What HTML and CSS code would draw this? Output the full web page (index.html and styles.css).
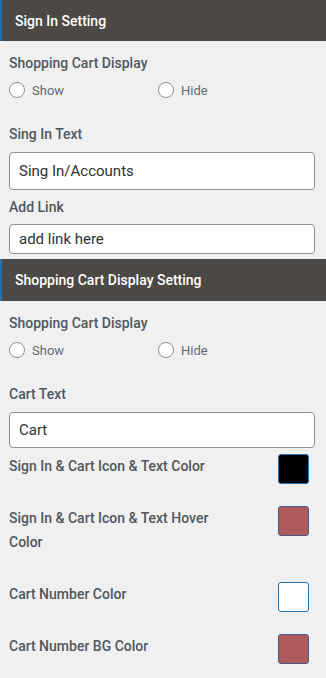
FILE: index.html
```
<!DOCTYPE html>
<html>
<head>
<meta charset="UTF-8">
<title>Header Settings</title>
<link rel="stylesheet" href="styles.css">
</head>
<body>

  <div class="head">Sign In Setting</div>
  <div class="sect">
    <div class="capt first">Shopping Cart Display</div>
    <div class="radios">
      <label class="radio"><span class="dot"></span>Show</label>
      <label class="radio"><span class="dot"></span>Hide</label>
    </div>

    <div class="capt gap">Sing In Text</div>
    <div class="field tall">Sing In/Accounts</div>

    <div class="capt near">Add Link</div>
    <div class="field short">add link here</div>
  </div>

  <div class="head">Shopping Cart Display Setting</div>
  <div class="sect">
    <div class="capt first">Shopping Cart Display</div>
    <div class="radios">
      <label class="radio"><span class="dot"></span>Show</label>
      <label class="radio"><span class="dot"></span>Hide</label>
    </div>

    <div class="capt gap">Cart Text</div>
    <div class="field mid">Cart</div>

    <div class="colors">
      <div class="crow">
        <span class="clabel">Sign In &amp; Cart Icon &amp; Text Color</span>
        <span class="swatch black"></span>
      </div>
      <div class="crow">
        <span class="clabel">Sign In &amp; Cart Icon &amp; Text Hover Color</span>
        <span class="swatch rose"></span>
      </div>
      <div class="crow">
        <span class="clabel">Cart Number Color</span>
        <span class="swatch white"></span>
      </div>
      <div class="crow">
        <span class="clabel">Cart Number BG Color</span>
        <span class="swatch rose"></span>
      </div>
    </div>
  </div>

</body>
</html>
```

FILE: styles.css
```
body
{
  margin : 0;
  background : #f0f0f0;
  font-family : Roboto, "Liberation Sans", sans-serif;
  color : #50575e;
}

.head
{
  height : 42px;
  display : flex;
  align-items : center;
  padding-left : 13px;
  border-left : 2px solid #2271b1;
  background : #4c4846;
  color : #fff;
  font-size : 14px;
  font-weight : 500;
}
.head:first-child
{
  height : 41px;
}

.sect
{
  padding : 0 11px 5px 9px;
}

.capt
{
  font-size : 14px;
  font-weight : 500;
  line-height : 20px;
  color : #50575e;
}
.capt.first
{
  padding-top : 12px;
}
.capt.gap
{
  margin-top : 24px;
}
.capt.near
{
  margin-top : 7px;
}

.radios
{
  display : grid;
  grid-template-columns : 149px 1fr;
  margin-top : 7px;
  height : 20px;
}

.radio
{
  display : flex;
  align-items : center;
  font-size : 13px;
  color : #646970;
}

.dot
{
  width : 14px;
  height : 14px;
  border : 1px solid #8c8f94;
  border-radius : 50%;
  background : #fff;
  margin-right : 7px;
}

.field
{
  display : flex;
  align-items : center;
  box-sizing : border-box;
  margin-top : 8px;
  padding-left : 9px;
  border : 1px solid #8c8f94;
  border-radius : 4px;
  background : #fff;
  font-size : 15px;
  color : #2c3338;
}
.field.tall
{
  height : 38px;
}
.field.short
{
  height : 30px;
  margin-top : 7px;
}
.field.mid
{
  height : 36px;
  margin-top : 8px;
}

.colors
{
  margin-top : 6px;
  display : flex;
  flex-direction : column;
  gap : 22px;
}

.crow
{
  display : flex;
  justify-content : space-between;
  align-items : flex-start;
}

.clabel
{
  max-width : 225px;
  font-size : 14px;
  font-weight : 500;
  line-height : 24px;
  padding-bottom : 6px;
}

.swatch
{
  box-sizing : border-box;
  width : 31px;
  height : 30px;
  margin-right : 6px;
  border : 1px solid #2271b1;
  border-radius : 3px;
}
.swatch.black
{
  background : #000;
}
.swatch.rose
{
  background : #b05b5b;
  border-color : #4a5a8a;
}
.swatch.white
{
  background : #fff;
}
```
